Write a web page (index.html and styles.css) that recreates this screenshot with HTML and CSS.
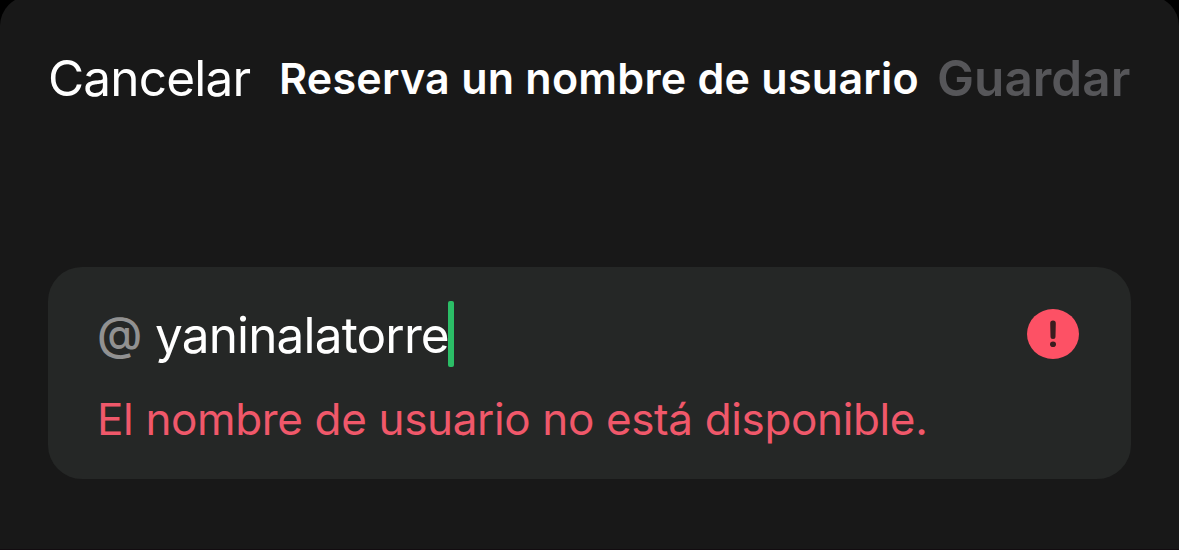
FILE: index.html
```
<!DOCTYPE html>
<html lang="es">
<head>
  <meta charset="UTF-8">
  <meta name="viewport" content="width=device-width, initial-scale=1.0">
  <title>Reserva un nombre de usuario</title>
  <link rel="stylesheet" href="styles.css">
</head>
<body>
  <div class="sheet">
    <header class="header">
      <span class="cancel">Cancelar</span>
      <h1 class="title">Reserva un nombre de usuario</h1>
      <span class="save">Guardar</span>
    </header>
    <div class="card">
      <div class="field">
        <span class="at">@</span>
        <span class="username">yaninalatorre</span>
        <span class="caret"></span>
        <svg class="alert" viewBox="0 0 52 50" width="52" height="50">
          <ellipse cx="26" cy="25" rx="26" ry="25" fill="#fd5165"/>
          <path d="M23.2 14.4a2.8 2.8 0 0 1 5.6 0l-.3 13a2.5 2.5 0 0 1-5 0z" fill="#3a1c1f"/>
          <ellipse cx="26" cy="35.2" rx="3" ry="2.8" fill="#3a1c1f"/>
        </svg>
      </div>
      <p class="error">El nombre de usuario no está disponible.</p>
    </div>
  </div>
</body>
</html>
```
FILE: styles.css
```
body {
  margin: 0;
  background-color: #000;
  font-family: 'Inter', 'Liberation Sans', sans-serif;
  color: #fff;
}
.sheet {
  box-sizing: border-box;
  display: flow-root;
  height: 554px;
  margin-top: -4px;
  padding: 52px 48px 0;
  background-color: #181818;
  border-bottom: 1px solid #120c10;
  border-radius: 30px 30px 0 0;
}
.header {
  display: flex;
  height: 60px;
  line-height: 60px;
  white-space: nowrap;
}
.cancel {
  width: 231px;
  font-size: 49.5px;
  letter-spacing: -0.8px;
}
.title {
  width: 658px;
  margin: 0;
  font-size: 43px;
  font-weight: 600;
  letter-spacing: 0.25px;
}
.save {
  font-size: 49.5px;
  font-weight: 600;
  letter-spacing: 0;
  color: #565659;
}
.card {
  box-sizing: border-box;
  height: 212px;
  margin-top: 159px;
  padding: 34px 52px 0 49px;
  background-color: #252726;
  border-radius: 34px;
}
.field {
  display: flex;
  align-items: center;
  height: 66px;
  line-height: 66px;
}
.at {
  width: 58px;
  margin-top: -2px;
  font-size: 46px;
  font-weight: 500;
  color: #919191;
}
.username {
  padding-top: 2px;
  font-size: 49.5px;
  letter-spacing: -0.85px;
}
.caret {
  width: 6px;
  height: 66px;
  margin-left: -1px;
  border-radius: 2px;
  background-color: #2bbd66;
}
.alert {
  margin-left: auto;
}
.error {
  margin: 24px 0 0;
  font-size: 44px;
  line-height: 56px;
  letter-spacing: -0.36px;
  white-space: nowrap;
  color: #f0586a;
}
```
